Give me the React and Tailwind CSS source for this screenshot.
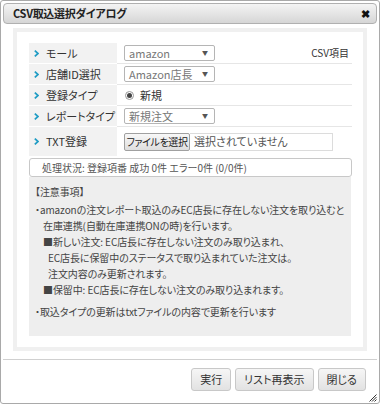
import React from "react";

const font = { fontFamily: '"Noto Sans CJK JP", "Liberation Sans", sans-serif' };

function Chevron() {
  return (
    <svg width="5" height="7" viewBox="0 0 5 7" className="shrink-0">
      <path d="M0.8 0.6 L4 3.5 L0.8 6.4" fill="none" stroke="#1f9cc4" strokeWidth="1.7" />
    </svg>
  );
}

function Select({ value }) {
  return (
    <div className="w-[91px] h-[16px] border border-[#b5b5b5] rounded-[2px] bg-white flex items-center justify-between pl-[4px] pr-[6px] text-[#777]">
      <span>{value}</span>
      <span className="text-[6px] text-[#555]">▼</span>
    </div>
  );
}

function Row({ label, children, right, h = "h-[21px]", last }) {
  return (
    <div className={`flex ${h}`}>
      <div className={`w-[88px] bg-[#f2f2f2] flex items-center gap-[7px] pl-[5px] ${last ? "" : "border-b border-white"}`}>
        <Chevron />
        <span className="text-[#333]">{label}</span>
      </div>
      <div className={`flex-1 flex items-center justify-between pl-[7px] pr-[3px] ${last ? "" : "border-b border-[#e6e6e6]"}`}>
        <div className="flex items-center">{children}</div>
        {right && <span className="text-[#333] text-[10px]">{right}</span>}
      </div>
    </div>
  );
}

export default function App() {
  return (
    <div
      style={font}
      className="w-[380px] h-[404px] bg-white border border-[#a9a9a9] rounded-[3px] p-[2px] flex flex-col relative text-[11px] [font-feature-settings:'palt'] leading-none"
    >
      <div className="h-[21px] border border-[#b0b0b0] rounded-[4px] bg-gradient-to-b from-[#f4f4f4] to-[#d6d6d6] flex items-center justify-between pl-[9px] pr-[6px]">
        <span className="font-bold text-[#222] text-[11px] tracking-[-0.3px]">CSV取込選択ダイアログ</span>
        <span className="text-[11px] font-bold text-[#111]">✖</span>
      </div>

      <div className="px-[10px] pt-[4px]">
        <div className="border-[4px] border-[#f0f0f0] bg-white pt-[11px] pl-[12px] pr-[11px] pb-[11px]">
          <div className="flex flex-col">
            <Row label="モール" right="CSV項目">
              <Select value="amazon" />
            </Row>
            <Row label="店舗ID選択">
              <Select value="Amazon店長" />
            </Row>
            <Row label="登録タイプ">
              <span className="w-[9px] h-[9px] rounded-full border border-[#999] bg-white flex items-center justify-center ml-[1px]">
                <span className="w-[5px] h-[5px] rounded-full bg-[#444]" />
              </span>
              <span className="ml-[6px] text-[#333]">新規</span>
            </Row>
            <Row label="レポートタイプ">
              <Select value="新規注文" />
            </Row>
            <Row label="TXT登録" h="h-[29px]" last>
              <div className="w-[66px] h-[18px] whitespace-nowrap border border-[#a0a0a0] rounded-[2px] bg-gradient-to-b from-[#f8f8f8] to-[#dedede] flex items-center justify-center text-[10px] tracking-[-0.4px] text-[#222]">
                ファイルを選択
              </div>
              <div className="w-[143px] h-[18px] whitespace-nowrap border border-[#dcdcdc] border-l-0 flex items-center pl-[4px] text-[#555]">
                選択されていません
              </div>
            </Row>
          </div>

          <div className="mt-[2px] h-[19px] border border-[#c8c8c8] rounded-[3px] flex items-center pl-[12px] text-[#555] text-[10px]">
            処理状況: 登録項番 成功 0件 エラー0件 (0/0件)
          </div>

          <div className="bg-[#eeeeee] text-[#444] text-[10px] leading-[16px] tracking-[-0.1px] pt-[7px] pb-[16px] pl-[6px] mr-[1px]">
            <div>【注意事項】</div>
            <div className="mt-[2px]">・amazonの注文レポート取込のみEC店長に存在しない注文を取り込むと</div>
            <div className="pl-[8px]">在庫連携(自動在庫連携ONの時)を行います。</div>
            <div className="pl-[8px]">■新しい注文: EC店長に存在しない注文のみ取り込まれ、</div>
            <div className="pl-[13px]">EC店長に保留中のステータスで取り込まれていた注文は。</div>
            <div className="pl-[13px]">注文内容のみ更新されます。</div>
            <div className="pl-[8px]">■保留中: EC店長に存在しない注文のみ取り込まれます。</div>
            <div className="h-[6px]" />
            <div>・取込タイプの更新はtxtファイルの内容で更新を行います</div>
          </div>
        </div>
      </div>

      <div className="flex-1" />
      <div className="border-t border-[#d0d0d0] pt-[8px] pb-[10px] pr-[11px] flex justify-end gap-[4px]">
        {["実行", "リスト再表示", "閉じる"].map((t) => (
          <div
            key={t}
            className="h-[23px] px-[8px] border border-[#c8c8c8] rounded-[3px] bg-gradient-to-b from-[#f6f6f6] to-[#e2e2e2] flex items-center text-[#333]"
          >
            {t}
          </div>
        ))}
      </div>

      <svg width="8" height="8" viewBox="0 0 8 8" className="absolute right-[2px] bottom-[1px]">
        <path d="M7.5 0.5 L0.5 7.5 M7.5 3 L3 7.5 M7.5 5.5 L5.5 7.5" stroke="#333" strokeWidth="1" />
      </svg>
    </div>
  );
}
